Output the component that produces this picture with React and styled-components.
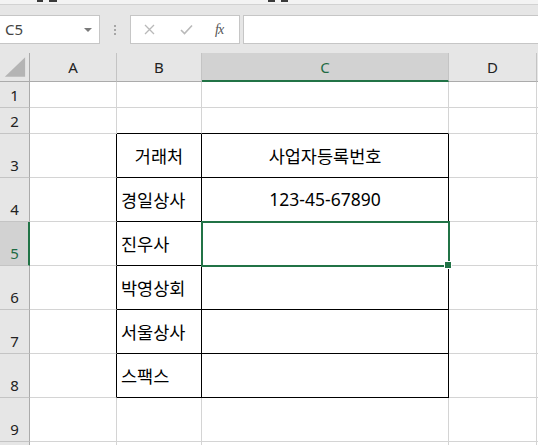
import React from 'react';
import styled, { createGlobalStyle } from 'styled-components';

const GlobalStyle = createGlobalStyle`
  html, body {
    margin: 0;
    padding: 0;
    background: #e6e6e6;
    overflow: hidden;
  }
  * { box-sizing: border-box; }
`;

const GREEN = '#217346';
const GRID = '#d4d4d4';

const columns = [
  { name: 'A', width: 87 },
  { name: 'B', width: 85 },
  { name: 'C', width: 247 },
  { name: 'D', width: 88 },
];

const rowHeights = [26, 26, 44, 44, 44, 44, 44, 44, 44];

const tableData = {
  3: { B: { text: '거래처', align: 'center' }, C: { text: '사업자등록번호', align: 'center' } },
  4: { B: { text: '경일상사' }, C: { text: '123-45-67890', align: 'center', num: true } },
  5: { B: { text: '진우사' } },
  6: { B: { text: '박영상회' } },
  7: { B: { text: '서울상사' } },
  8: { B: { text: '스팩스' } },
};

const selected = { col: 'C', row: 5 };

function App() {
  const template = `30px ${columns.map(c => c.width + 'px').join(' ')} 1fr`;

  const isTable = (col, row) => row >= 3 && row <= 8 && (col === 'B' || col === 'C');

  return (
    <>
      <GlobalStyle />
      <Page>
        <TopStrip>
          <Mark style={{ marginLeft: 37 }} $w={6} />
          <Mark $w={8} />
          <Mark style={{ marginLeft: 205 }} $w={7} />
          <Mark $w={7} />
        </TopStrip>

        <FormulaBar>
          <NameBox>
            <NameText>C5</NameText>
            <DropArrow />
          </NameBox>
          <Dots>
            <span /><span /><span />
          </Dots>
          <FxBox>
            <IconBtn>
              <svg width="11" height="11" viewBox="0 0 11 11">
                <path d="M1 1 L10 10 M10 1 L1 10" stroke="#b9b9b9" strokeWidth="1.3" fill="none" />
              </svg>
            </IconBtn>
            <IconBtn>
              <svg width="13" height="11" viewBox="0 0 13 11">
                <path d="M1 6 L4.5 9.5 L12 1.5" stroke="#b9b9b9" strokeWidth="1.6" fill="none" />
              </svg>
            </IconBtn>
            <FxText>fx</FxText>
          </FxBox>
          <FormulaInput />
        </FormulaBar>

        <Sheet $template={template} $rows={`29px ${rowHeights.map(h => h + 'px').join(' ')} 1fr`}>
          <Corner>
            <svg width="30" height="29" viewBox="0 0 30 29">
              <polygon points="5,24 26,24 26,4" fill="#b4b4b4" />
            </svg>
          </Corner>
          {columns.map(c => (
            <ColHeader key={c.name} $active={c.name === selected.col}>{c.name}</ColHeader>
          ))}
          <ColHeader $last />

          {rowHeights.map((h, i) => {
            const row = i + 1;
            return (
              <React.Fragment key={row}>
                <RowHeader $active={row === selected.row}>{row}</RowHeader>
                {columns.map(c => {
                  const data = tableData[row] && tableData[row][c.name];
                  const next = columns[columns.indexOf(c) + 1];
                  const rightBlack = isTable(c.name, row) || (next && isTable(next.name, row));
                  const bottomBlack = isTable(c.name, row) || isTable(c.name, row + 1);
                  return (
                    <Cell
                      key={c.name}
                      $right={rightBlack ? '#000' : GRID}
                      $bottom={bottomBlack ? '#000' : GRID}
                      $align={data && data.align}
                      $selected={c.name === selected.col && row === selected.row}
                    >
                      {data && <CellText $num={data.num}>{data.text}</CellText>}
                    </Cell>
                  );
                })}
                <Cell $right={GRID} $bottom={GRID} />
              </React.Fragment>
            );
          })}
          <RowHeader />
          {columns.map(c => (
            <Cell key={c.name} $right={GRID} $bottom={GRID} />
          ))}
          <Cell $right={GRID} $bottom={GRID} />
        </Sheet>
      </Page>
    </>
  );
}

export default App;

const Page = styled.div`
  width: 538px;
  height: 445px;
  display: flex;
  flex-direction: column;
  background: #e6e6e6;
  overflow: hidden;
  font-family: "Noto Sans", "Segoe UI", sans-serif;
`;

const TopStrip = styled.div`
  height: 5px;
  flex: none;
  display: flex;
  align-items: flex-start;
  gap: 6px;
  background: #f3f3f3;
  border-bottom: 1px solid #d2d2d2;
`;

const Mark = styled.span`
  display: block;
  width: ${p => p.$w}px;
  height: 2px;
  background: #3a3a3a;
`;

const FormulaBar = styled.div`
  height: 48px;
  flex: none;
  display: flex;
  align-items: flex-start;
  padding-top: 10px;
`;

const NameBox = styled.div`
  width: 100px;
  height: 29px;
  background: #fff;
  border: 1px solid #c6c6c6;
  border-left: none;
  display: flex;
  align-items: center;
  justify-content: space-between;
  padding: 0 7px 0 5px;
`;

const NameText = styled.span`
  font-size: 15px;
  color: #444;
  line-height: 1;
`;

const DropArrow = styled.span`
  width: 0;
  height: 0;
  border-left: 4px solid transparent;
  border-right: 4px solid transparent;
  border-top: 4px solid #7a7a7a;
`;

const Dots = styled.div`
  width: 30px;
  height: 29px;
  display: flex;
  flex-direction: column;
  align-items: center;
  justify-content: center;
  gap: 2px;
  span {
    width: 2px;
    height: 2px;
    background: #a6a6a6;
  }
`;

const FxBox = styled.div`
  width: 110px;
  height: 29px;
  background: #fff;
  border: 1px solid #c6c6c6;
  display: flex;
  align-items: center;
  padding-left: 13px;
  gap: 0;
`;

const IconBtn = styled.span`
  width: 36px;
  display: flex;
  align-items: center;
  justify-content: flex-start;
`;

const FxText = styled.span`
  font-family: "Liberation Serif", "DejaVu Serif", serif;
  font-style: italic;
  font-size: 14px;
  color: #555;
  letter-spacing: -1px;
  margin-left: -1px;
`;

const FormulaInput = styled.div`
  flex: 1;
  height: 29px;
  margin-left: 3px;
  background: #fff;
  border: 1px solid #c6c6c6;
  border-right: none;
`;

const Sheet = styled.div`
  flex: 1;
  display: grid;
  grid-template-columns: ${p => p.$template};
  grid-template-rows: ${p => p.$rows};
  background: #fff;
`;

const Corner = styled.div`
  background: #e6e6e6;
  border-right: 1px solid #ababab;
  border-bottom: 1px solid #ababab;
  display: flex;
`;

const ColHeader = styled.div`
  background: ${p => (p.$active ? '#d2d2d2' : '#e6e6e6')};
  border-right: 1px solid ${p => (p.$last ? '#e6e6e6' : '#c4c4c4')};
  border-bottom: ${p => (p.$active ? `2px solid ${GREEN}` : '1px solid #ababab')};
  display: flex;
  align-items: center;
  justify-content: center;
  padding-top: ${p => (p.$active ? '1px' : '0')};
  font-size: 15px;
  color: ${p => (p.$active ? '#1e6b44' : '#222')};
`;

const RowHeader = styled.div`
  background: ${p => (p.$active ? '#d2d2d2' : '#e6e6e6')};
  border-right: ${p => (p.$active ? `2px solid ${GREEN}` : '1px solid #ababab')};
  border-bottom: 1px solid #c4c4c4;
  display: flex;
  align-items: flex-end;
  justify-content: center;
  padding-bottom: 4px;
  padding-left: ${p => (p.$active ? '1px' : '0')};
  font-size: 15px;
  line-height: 1;
  color: ${p => (p.$active ? '#1e6b44' : '#222')};
`;

const Cell = styled.div`
  position: relative;
  background: #fff;
  border-right: 1px solid ${p => p.$right};
  border-bottom: 1px solid ${p => p.$bottom};
  display: flex;
  align-items: center;
  justify-content: ${p => (p.$align === 'center' ? 'center' : 'flex-start')};
  padding-left: ${p => (p.$align === 'center' ? '0' : '4px')};
  padding-top: 1px;
  ${p =>
    p.$selected &&
    `
    z-index: 2;
    outline: 2px solid ${GREEN};
    outline-offset: -1px;
    &::after {
      content: '';
      position: absolute;
      right: -4px;
      bottom: -4px;
      width: 6px;
      height: 6px;
      background: ${GREEN};
      border: 1px solid #fff;
    }
  `}
`;

const CellText = styled.span`
  font-family: ${p => (p.$num ? '"Noto Sans", "Noto Sans CJK KR", sans-serif' : '"Noto Sans CJK KR", sans-serif')};
  font-size: 17.5px;
  color: #000;
  line-height: 1;
  white-space: nowrap;
`;
